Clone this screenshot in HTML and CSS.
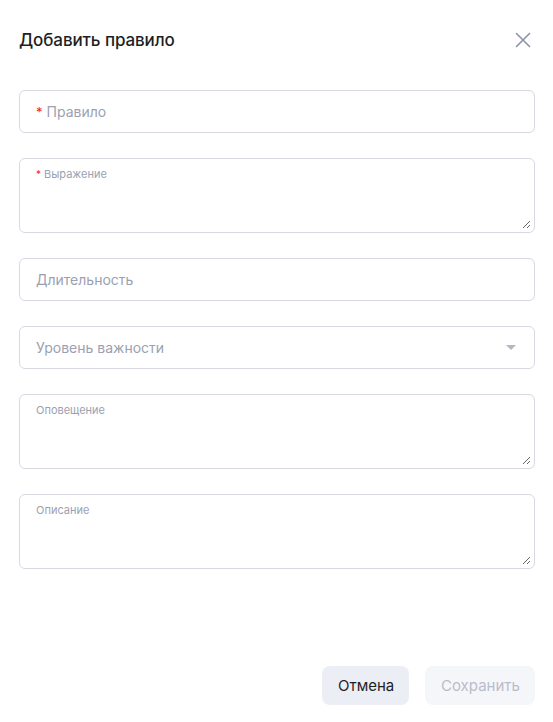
FILE: index.html
```html
<!DOCTYPE html>
<html lang="ru">
  <head>
    <meta charset="utf-8" />
    <title>Добавить правило</title>
    <link rel="stylesheet" href="styles.css">
  </head>
  <body>
    <div class="modal">
      <div class="modal-header">
        <h1 class="modal-title">Добавить правило</h1>
        <button class="close-btn" aria-label="Закрыть">
          <svg width="16" height="16" viewBox="0 0 16 16">
            <path d="M1.5 1.5 L14.5 14.5 M14.5 1.5 L1.5 14.5" stroke="#8b93a7" stroke-width="1.6" fill="none" stroke-linecap="round"/>
          </svg>
        </button>
      </div>

      <form class="form">
        <div class="field">
          <span class="req">*</span><input class="field-input" type="text" placeholder="Правило">
        </div>

        <div class="field field-area">
          <label class="area-label"><span class="req">*</span>Выражение</label>
          <textarea class="area-input"></textarea>
        </div>

        <div class="field">
          <input class="field-input" type="text" placeholder="Длительность">
        </div>

        <div class="field field-select">
          <span class="select-text">Уровень важности</span>
          <span class="caret"></span>
        </div>

        <div class="field field-area">
          <label class="area-label">Оповещение</label>
          <textarea class="area-input"></textarea>
        </div>

        <div class="field field-area">
          <label class="area-label">Описание</label>
          <textarea class="area-input"></textarea>
        </div>
      </form>

      <div class="modal-footer">
        <button class="btn btn-cancel">Отмена</button>
        <button class="btn btn-save" disabled>Сохранить</button>
      </div>
    </div>
  </body>
</html>
```

FILE: styles.css
```css
body {
  margin: 0;
  background: #fff;
  font-family: 'Inter', 'Noto Sans', sans-serif;
  color: #1d1f24;
}

.modal {
  height: 100vh;
  box-sizing: border-box;
  padding: 0 18px 17px 19px;
  display: flex;
  flex-direction: column;
}

.modal-header {
  height: 80px;
  display: flex;
  align-items: center;
  justify-content: space-between;
}

.modal-title {
  margin: 0;
  font-size: 17px;
  font-weight: 500;
  line-height: 20px;
  letter-spacing: -0.1px;
}

.close-btn {
  border: none;
  background: none;
  padding: 0;
  margin-right: 4px;
  width: 16px;
  height: 16px;
  cursor: pointer;
}

.form {
  margin-top: 10px;
  display: flex;
  flex-direction: column;
  gap: 25px;
}

.field {
  box-sizing: border-box;
  height: 43px;
  border: 1px solid #d7d9e3;
  border-radius: 6px;
  display: flex;
  align-items: center;
  padding-left: 16px;
}

.req {
  color: #f5222d;
  font-size: 13px;
  margin-right: 4px;
}

.field-input {
  flex: 1;
  border: none;
  outline: none;
  background: transparent;
  font-family: inherit;
  font-size: 14px;
  color: #1d1f24;
  padding: 0;
}

.field-input::placeholder {
  color: #9ba1b2;
}

.field-area {
  height: 75px;
  flex-direction: column;
  align-items: stretch;
  padding: 8px 3px 3px 16px;
}

.area-label {
  font-size: 11px;
  line-height: 14px;
  color: #9ba1b2;
}

.area-label .req {
  font-size: 10px;
  margin-right: 3px;
}

.area-input {
  flex: 1;
  border: none;
  outline: none;
  resize: vertical;
  padding: 0;
  font-family: inherit;
  background: transparent;
}

.field-select {
  justify-content: space-between;
  padding-right: 18px;
}

.select-text {
  font-size: 14px;
  color: #9ba1b2;
}

.caret {
  width: 0;
  height: 0;
  border-left: 5px solid transparent;
  border-right: 5px solid transparent;
  border-top: 5px solid #b3b7c3;
}

.modal-footer {
  margin-top: auto;
  display: flex;
  justify-content: flex-end;
  gap: 16px;
}

.btn {
  height: 39px;
  border: none;
  border-radius: 8px;
  font-family: inherit;
  font-size: 15px;
  font-weight: 400;
  padding: 0 16px;
  cursor: pointer;
}

.btn-cancel {
  width: 87px;
  background: #eceef5;
  color: #1d1f24;
}

.btn-save {
  width: 110px;
  background: #f5f6fa;
  color: #b9bdcb;
  cursor: default;
}
```
